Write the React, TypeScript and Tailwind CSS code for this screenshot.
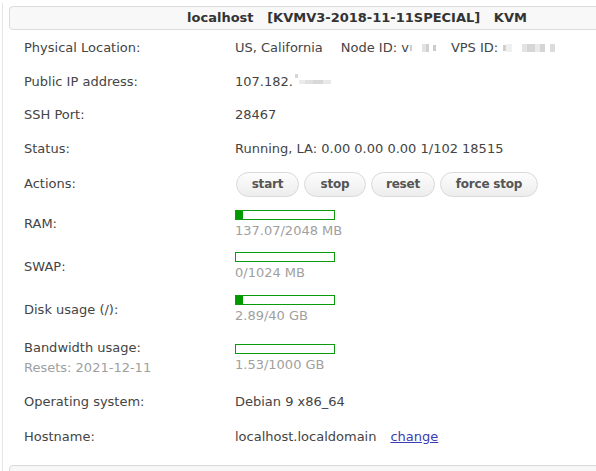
import React from "react";

const Bar = ({ pct }: { pct: number }) => (
  <div className="w-[100px] h-[10px] border border-[#0a9a0a] bg-white">
    <div className="h-full bg-[#009a00]" style={{ width: `${pct}%` }} />
  </div>
);

const Usage = ({ pct, text }: { pct: number; text: string }) => (
  <div className="flex flex-col">
    <Bar pct={pct} />
    <div className="mt-[3px] leading-[16px] text-[#a0a0a0]">{text}</div>
  </div>
);

const Blur = ({ w, c = "#e4e4e4", h = 8 }: { w: number; c?: string; h?: number }) => (
  <span className="inline-block align-middle" style={{ width: w, height: h, background: c }} />
);

const Row = ({ h, label, children }: { h: string; label: React.ReactNode; children: React.ReactNode }) => (
  <div className={`flex items-center ${h}`}>
    <div className="w-[211px] shrink-0">{label}</div>
    <div className="flex items-center">{children}</div>
  </div>
);

const Btn = ({ w, children }: { w: string; children: React.ReactNode }) => (
  <button
    className={`${w} h-[25px] px-0 rounded-full border border-[#d9d9d9] bg-gradient-to-b from-[#fdfdfd] to-[#ededed] text-[12px] font-bold text-[#555] leading-none tracking-[-0.2px]`}
  >
    {children}
  </button>
);

export default function App() {
  return (
    <div
      className="w-[596px] h-[471px] overflow-hidden bg-white text-[13px] leading-[16px] text-[#444]"
      style={{ fontFamily: '"DejaVu Sans", Verdana, sans-serif' }}
    >
      <div className="ml-[2px] mt-[3px] w-[720px] border-l border-[#e6e6e6] pl-[6px] pt-[3px]">
        <div className="w-[696px] h-[24px] border border-[#dcdcdc] rounded-[4px] bg-[#f8f8f8] flex items-center justify-center font-bold text-[13px] text-[#333] whitespace-pre">
          {"localhost   [KVMV3-2018-11-11SPECIAL]   KVM"}
        </div>
        <div className="pl-[15px] flex flex-col">
          <Row h="h-[36px]" label="Physical Location:">
            <span>US, California</span>
            <span className="ml-[18px]">Node ID: v</span>
            <span className="ml-[1px] flex items-center">
              <Blur w={2} c="#cfcfcf" h={6} />
              <Blur w={10} c="#ffffff" />
              <Blur w={4} c="#e2e2e2" />
              <Blur w={3} c="#cfcfcf" />
              <Blur w={4} c="#ffffff" />
              <Blur w={3} c="#cccccc" h={6} />
            </span>
            <span className="ml-[15px]">VPS ID:</span>
            <span className="ml-[5px] flex items-center">
              <Blur w={3} c="#d0d0d0" h={6} />
              <Blur w={6} c="#f0f0f0" />
              <Blur w={10} c="#ffffff" />
              <Blur w={5} c="#e3e3e3" />
              <Blur w={8} c="#d6d6d6" />
              <Blur w={5} c="#eaeaea" />
              <Blur w={5} c="#d4d4d4" />
              <Blur w={5} c="#ffffff" />
              <Blur w={5} c="#dcdcdc" />
            </span>
          </Row>
          <Row h="h-[32px]" label="Public IP address:">
            <span>107.182.</span>
            <span className="ml-[2px] relative flex items-center">
              <span className="absolute left-0 top-[-6px] w-[3px] h-[4px] bg-[#d6d6d6]" />
              <Blur w={4} c="#ffffff" h={4} />
              <Blur w={6} c="#ececec" h={4} />
              <Blur w={8} c="#e0e0e0" h={4} />
              <Blur w={10} c="#d8d8d8" h={4} />
              <Blur w={8} c="#e8e8e8" h={4} />
            </span>
          </Row>
          <Row h="h-[34px]" label="SSH Port:">
            <span>28467</span>
          </Row>
          <Row h="h-[33px]" label="Status:">
            <span>Running, LA: 0.00 0.00 0.00 1/102 18515</span>
          </Row>
          <Row h="h-[38px]" label="Actions:">
            <div className="flex gap-[5px] ml-[1px]">
              <Btn w="w-[63px]">start</Btn>
              <Btn w="w-[62px]">stop</Btn>
              <Btn w="w-[64px]">reset</Btn>
              <Btn w="w-[98px]">force stop</Btn>
            </div>
          </Row>
          <Row h="h-[42px]" label="RAM:">
            <Usage pct={7} text="137.07/2048 MB" />
          </Row>
          <Row h="h-[43px]" label="SWAP:">
            <Usage pct={0} text="0/1024 MB" />
          </Row>
          <Row h="h-[43px]" label="Disk usage (/):">
            <Usage pct={7} text="2.89/40 GB" />
          </Row>
          <Row
            h="h-[54px]"
            label={
              <div className="flex flex-col leading-[20px]">
                <span>Bandwidth usage:</span>
                <span className="text-[#a0a0a0]">Resets: 2021-12-11</span>
              </div>
            }
          >
            <Usage pct={0} text="1.53/1000 GB" />
          </Row>
          <Row h="h-[34px]" label="Operating system:">
            <span>Debian 9 x86_64</span>
          </Row>
          <Row h="h-[36px]" label="Hostname:">
            <span>localhost.localdomain</span>
            <a href="#" className="ml-[14px] text-[#3b3bb3] underline">
              change
            </a>
          </Row>
        </div>
        <div className="mt-[10px] w-[696px] h-[20px] border border-[#d8d8d8] rounded-t-[4px] bg-[#f7f7f7]" />
      </div>
    </div>
  );
}
